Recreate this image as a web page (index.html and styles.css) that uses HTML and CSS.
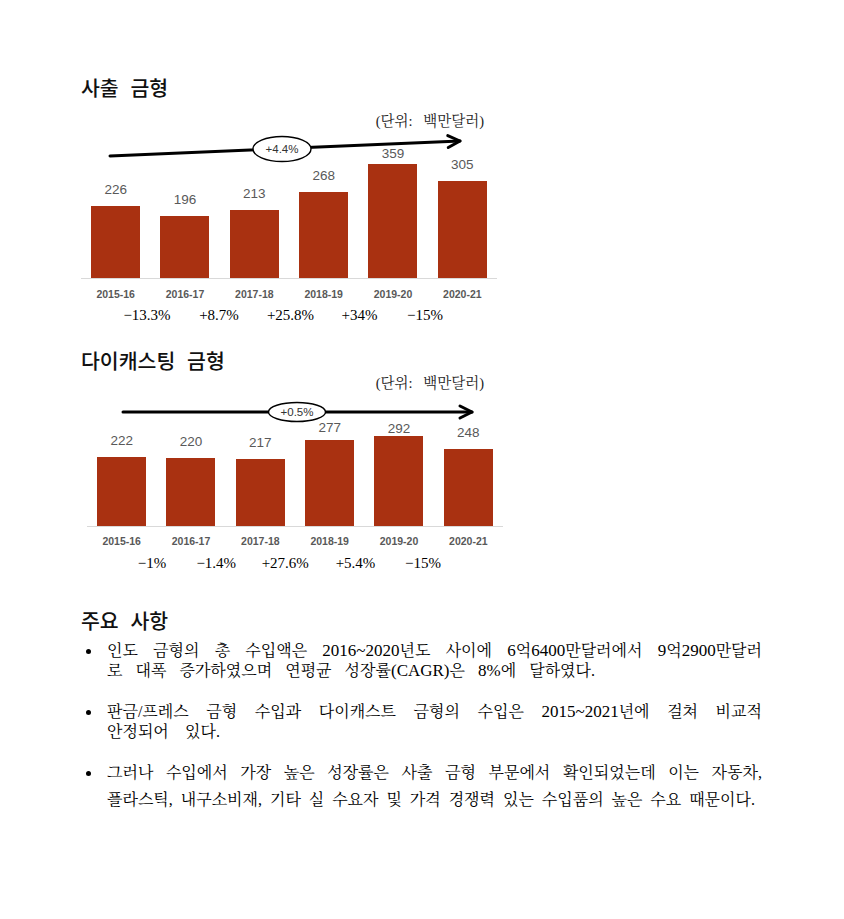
FILE: index.html
```html
<!DOCTYPE html>
<html lang="ko">
<head>
<meta charset="utf-8">
<title>금형 수입</title>
<link rel="stylesheet" href="styles.css">
</head>
<body>
<div class="page">
  <section class="chart chart-a">
    <h2 class="title">사출 금형</h2>
    <div class="unit">(단위: 백만달러)</div>
    <div class="plot">
      <div class="col"><span class="val">226</span><span class="bar" style="height:72px"></span></div>
      <div class="col"><span class="val">196</span><span class="bar" style="height:62px"></span></div>
      <div class="col"><span class="val">213</span><span class="bar" style="height:68px"></span></div>
      <div class="col"><span class="val">268</span><span class="bar" style="height:86px"></span></div>
      <div class="col"><span class="val" style="margin-bottom:2px">359</span><span class="bar" style="height:114px"></span></div>
      <div class="col"><span class="val">305</span><span class="bar" style="height:97px"></span></div>
      <svg class="trend" width="416" height="40" viewBox="0 0 416 40">
        <line class="arrow" x1="29" y1="27" x2="379" y2="12"/>
        <polyline class="arrow" points="367,6 379,12 367,18" transform="rotate(-2.45 379 12)"/>
        <ellipse class="badge" cx="201" cy="20" rx="29" ry="12.5"/>
        <text class="badge-text" x="201" y="24" text-anchor="middle">+4.4%</text>
      </svg>
    </div>
    <div class="years"><span>2015-16</span><span>2016-17</span><span>2017-18</span><span>2018-19</span><span>2019-20</span><span>2020-21</span></div>
    <div class="growth"><span>−13.3%</span><span>+8.7%</span><span>+25.8%</span><span>+34%</span><span>−15%</span></div>
  </section>

  <section class="chart chart-b">
    <h2 class="title">다이캐스팅 금형</h2>
    <div class="unit">(단위: 백만달러)</div>
    <div class="plot">
      <div class="col"><span class="val">222</span><span class="bar" style="height:69px"></span></div>
      <div class="col"><span class="val">220</span><span class="bar" style="height:68px"></span></div>
      <div class="col"><span class="val">217</span><span class="bar" style="height:67px"></span></div>
      <div class="col"><span class="val" style="margin-bottom:4px">277</span><span class="bar" style="height:86px"></span></div>
      <div class="col"><span class="val" style="margin-bottom:-1px">292</span><span class="bar" style="height:90px"></span></div>
      <div class="col"><span class="val">248</span><span class="bar" style="height:77px"></span></div>
      <svg class="trend" width="416" height="40" viewBox="0 0 416 40">
        <line class="arrow" x1="36" y1="21" x2="385" y2="21"/>
        <polyline class="arrow" points="373,15 385,21 373,27"/>
        <ellipse class="badge" cx="210" cy="21" rx="28.5" ry="9.5"/>
        <text class="badge-text" x="210" y="25" text-anchor="middle">+0.5%</text>
      </svg>
    </div>
    <div class="years"><span>2015-16</span><span>2016-17</span><span>2017-18</span><span>2018-19</span><span>2019-20</span><span>2020-21</span></div>
    <div class="growth"><span>−1%</span><span>−1.4%</span><span>+27.6%</span><span>+5.4%</span><span>−15%</span></div>
  </section>

  <section class="notes">
    <h2 class="title">주요 사항</h2>
    <ul class="list">
      <li>
        <span class="dot"></span>
        <p class="item">
          <span class="ln">인도 금형의 총 수입액은 <span class="lat">2016~2020</span>년도 사이에 <span class="lat">6</span>억<span class="lat">6400</span>만달러에서 <span class="lat">9</span>억<span class="lat">2900</span>만달러</span>
          <span class="ln end-1">로 대폭 증가하였으며 연평균 성장률<span class="lat">(CAGR)</span>은 <span class="lat">8%</span>에 달하였다.</span>
        </p>
      </li>
      <li>
        <span class="dot"></span>
        <p class="item">
          <span class="ln">판금/프레스 금형 수입과 다이캐스트 금형의 수입은 <span class="lat">2015~2021</span>년에 걸쳐 비교적</span>
          <span class="ln end-2">안정되어 있다.</span>
        </p>
      </li>
      <li>
        <span class="dot"></span>
        <p class="item">
          <span class="ln">그러나 수입에서 가장 높은 성장률은 사출 금형 부문에서 확인되었는데 이는 자동차,</span>
          <span class="ln end-3 tall">플라스틱, 내구소비재, 기타 실 수요자 및 가격 경쟁력 있는 수입품의 높은 수요 때문이다.</span>
        </p>
      </li>
    </ul>
  </section>
</div>
</body>
</html>
```

FILE: styles.css
```css
body {
  margin: 0;
  background: #ffffff;
  color: #000000;
}

.page {
  padding: 75px 0 0 81px;
}

.title {
  margin: 0;
  font-family: "Noto Sans CJK KR", sans-serif;
  font-weight: 500;
  font-size: 20.5px;
  line-height: 24px;
  word-spacing: 6px;
  color: #111111;
}

.unit {
  width: 403px;
  text-align: right;
  font-family: "Liberation Serif", "Noto Serif CJK KR", "Noto Sans CJK KR", serif;
  font-size: 14.5px;
  line-height: 16px;
  word-spacing: 7px;
  color: #222222;
}

.chart-a .unit {
  margin-top: 14px;
}

.chart-b {
  margin-top: 25px;
}

.chart-b .unit {
  margin-top: 3px;
}

.plot {
  position: relative;
  width: 416px;
  display: grid;
  grid-template-columns: repeat(6, 1fr);
  border-bottom: 1px solid #d9d9d9;
}

.chart-a .plot {
  height: 149px;
}

.chart-b .plot {
  height: 135px;
  margin-left: 6px;
}

.col {
  display: flex;
  flex-direction: column;
  justify-content: flex-end;
  align-items: center;
}

.val {
  font-family: "Liberation Sans", sans-serif;
  font-size: 13.5px;
  line-height: 16px;
  color: #595959;
  margin-bottom: 8px;
}

.bar {
  display: block;
  width: 49px;
  background: #a93111;
}

.trend {
  position: absolute;
  left: 0;
  top: 0;
  overflow: visible;
}

.arrow {
  fill: none;
  stroke: #000000;
  stroke-width: 3;
  stroke-linecap: round;
  stroke-linejoin: round;
}

.badge {
  fill: #ffffff;
  stroke: #000000;
  stroke-width: 1.4;
}

.badge-text {
  font-family: "Liberation Sans", sans-serif;
  font-size: 11.5px;
  fill: #333333;
}

.years {
  width: 416px;
  display: grid;
  grid-template-columns: repeat(6, 1fr);
  text-align: center;
  font-family: "Liberation Sans", sans-serif;
  font-weight: bold;
  font-size: 10.5px;
  line-height: 14px;
  color: #595959;
}

.chart-a .years {
  margin-top: 8px;
}

.chart-b .years {
  margin-top: 7px;
  margin-left: 6px;
}

.growth {
  display: grid;
  text-align: center;
  font-family: "Liberation Serif", serif;
  font-size: 15px;
  line-height: 16px;
  color: #000000;
}

.chart-a .growth {
  margin: 6px 0 0 30px;
  grid-template-columns: 72px 72px 71px 67px 64px;
}

.chart-b .growth {
  margin: 7px 0 0 40px;
  grid-template-columns: 62px 66.5px 71.5px 69px 66px;
}

.notes {
  margin-top: 37px;
}

.list {
  list-style: none;
  margin: 9px 0 0;
  padding: 0;
}

.list li {
  display: grid;
  grid-template-columns: 26px 655px;
}

.list li + li {
  margin-top: 21px;
}

.dot {
  width: 5px;
  height: 5px;
  border-radius: 50%;
  background: #000000;
  margin: 7.5px 0 0 4.5px;
}

.item {
  margin: 0;
}

.ln {
  display: block;
  text-align: justify;
  text-align-last: justify;
  font-family: "Liberation Serif", "Noto Serif CJK KR", "Noto Sans CJK KR", serif;
  font-size: 16px;
  line-height: 20px;
  color: #000000;
}

.lat {
  font-size: 17px;
}

.end-1 {
  width: 488px;
}

.end-2 {
  width: 113px;
}

.end-3 {
  width: 648px;
}

.tall {
  margin-top: 7px;
}
```
